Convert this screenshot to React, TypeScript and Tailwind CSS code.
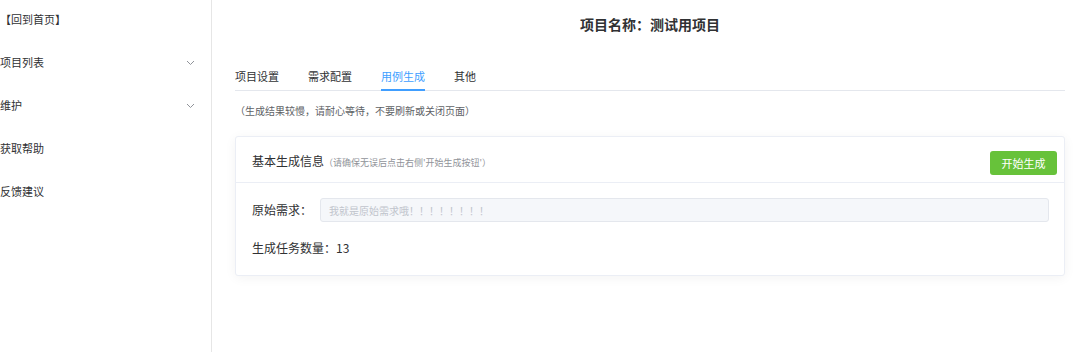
import React from "react";

const font = { fontFamily: '"Noto Sans CJK SC", "Noto Sans", sans-serif' };

const menu = [
  { label: "【回到首页】", arrow: false },
  { label: "项目列表", arrow: true },
  { label: "维护", arrow: true },
  { label: "获取帮助", arrow: false },
  { label: "反馈建议", arrow: false },
];

const tabs = ["项目设置", "需求配置", "用例生成", "其他"];

function Chevron() {
  return (
    <svg width="9" height="6" viewBox="0 0 9 6" className="text-[#909399]">
      <polyline points="1,1 4.5,4.5 8,1" fill="none" stroke="currentColor" strokeWidth="1" />
    </svg>
  );
}

function Sidebar() {
  return (
    <aside className="w-[212px] h-full shrink-0 border-r border-[#e6e6e6] bg-white">
      <ul className="-mt-[2px]">
        {menu.map((m) => (
          <li key={m.label} className="h-[43px] flex items-center justify-between pr-[16px] text-[11px] text-[#303133]">
            <span>{m.label}</span>
            {m.arrow && <Chevron />}
          </li>
        ))}
      </ul>
    </aside>
  );
}

export default function App() {
  const active = "用例生成";
  return (
    <div className="flex w-[1080px] h-[352px] bg-white overflow-hidden" style={font}>
      <Sidebar />
      <main className="flex-1 pl-[23px] pr-[15px]">
        <div className="h-[48px] flex items-center justify-center text-[14px] font-bold text-[#303133]">
          项目名称：测试用项目
        </div>

        <div className="mt-[14px] h-[29px] flex border-b border-[#e4e7ed]">
          {tabs.map((t, i) => (
            <div
              key={t}
              className={
                "relative h-full flex items-center text-[11px] " +
                (i === 0 ? "pr-[14.5px] " : "px-[14.5px] ") +
                (t === active ? "text-[#409eff]" : "text-[#303133]")
              }
            >
              {t}
              {t === active && (
                <span className="absolute left-[14.5px] right-[14.5px] -bottom-[1px] h-[2px] bg-[#409eff]" />
              )}
            </div>
          ))}
        </div>

        <div className="mt-[9px] h-[20px] flex items-center text-[10px] text-[#606266]">
          （生成结果较慢，请耐心等待，不要刷新或关闭页面）
        </div>

        <section className="mt-[16px] border border-[#ebeef5] rounded-[3px] bg-white shadow-[0_2px_12px_0_rgba(0,0,0,0.05)]">
          <div className="h-[46px] flex items-center justify-between pl-[16px] pr-[7px] border-b border-[#ebeef5]">
            <div className="mt-[2px] flex items-baseline">
              <span className="text-[12px] text-[#303133]">基本生成信息</span>
              <span className="text-[9px] text-[#909399]">（请确保无误后点击右侧'开始生成按钮'）</span>
            </div>
            <button className="mt-[7px] h-[24px] w-[67px] rounded-[3px] bg-[#67c23a] text-white text-[11px]">
              开始生成
            </button>
          </div>

          <div className="pt-[15px] pb-[15px] pl-[16px] pr-[15px]">
            <div className="h-[24px] flex items-center">
              <span className="w-[68px] shrink-0 text-[12px] text-[#303133]">原始需求：</span>
              <div className="flex-1 h-[24px] flex items-center px-[8px] bg-[#f5f7fa] border border-[#e4e7ed] rounded-[3px] text-[10px] text-[#c0c4cc]">
                我就是原始需求哦！！！！！！！！
              </div>
            </div>
            <div className="mt-[14px] h-[24px] flex items-center text-[12px] text-[#303133]">
              生成任务数量：13
            </div>
          </div>
        </section>
      </main>
    </div>
  );
}
